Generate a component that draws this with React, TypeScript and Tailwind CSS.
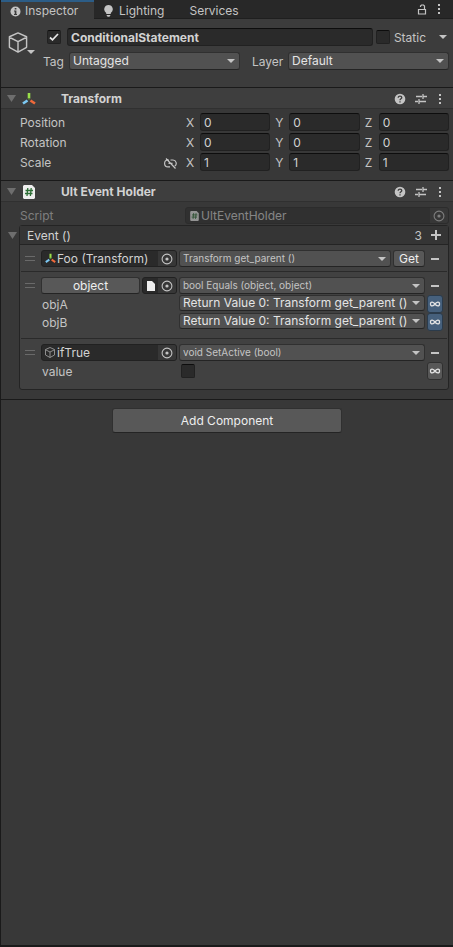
import React from 'react';

const INPUT =
  'min-w-0 rounded-[3px] border border-[#212121] border-t-[#0d0d0d] bg-[#2a2a2a] text-[#d2d2d2] outline-none';

function Arrow({ className = '' }: { className?: string }) {
  return (
    <svg viewBox="0 0 8 4" className={'h-1 w-2 fill-[#c4c4c4] ' + className} aria-hidden="true">
      <path d="M0 0h8L4 4z" />
    </svg>
  );
}

function Foldout({ label }: { label: string }) {
  return (
    <button aria-label={label} className="flex h-4 w-[9px] shrink-0 items-center">
      <svg viewBox="0 0 9 7" className="h-[7px] w-[9px] fill-[#6e6e6e]" aria-hidden="true">
        <path d="M0 0h9L4.500 7z" />
      </svg>
    </button>
  );
}

function Dropdown({ label, value, className = '', size = 'h-[18px] text-xs' }: { label: string; value: string; className?: string; size?: string }) {
  return (
    <div className={'relative min-w-0 ' + className}>
      <select
        aria-label={label}
        defaultValue={value}
        className={'block w-full appearance-none rounded-[3px] border border-[#303030] border-b-[#242424] bg-[#515151] pr-3 pl-[3px] outline-none ' + size}
      >
        <option>{value}</option>
      </select>
      <Arrow className="pointer-events-none absolute top-1/2 right-[5px] -translate-y-1/2" />
    </div>
  );
}

function Check({ label, checked = false }: { label: string; checked?: boolean }) {
  return (
    <span className="relative block size-[14px] shrink-0">
      <input
        type="checkbox"
        aria-label={label}
        defaultChecked={checked}
        className="block size-[14px] appearance-none rounded-[2px] border border-[#212121] border-t-[#0d0d0d] bg-[#2a2a2a]"
      />
      {checked && (
        <svg viewBox="0 0 14 14" className="pointer-events-none absolute inset-0 size-[14px]" fill="none" stroke="#e8e8e8" strokeWidth="1.700" aria-hidden="true">
          <path d="M3 7.500l2.500 2.300L11 4" />
        </svg>
      )}
    </span>
  );
}

function Kebab() {
  return (
    <svg viewBox="0 0 4 12" className="h-3 w-1 fill-[#c4c4c4]" aria-hidden="true">
      <path d="M1 1h2v2H1zM1 5h2v2H1zM1 9h2v2H1z" />
    </svg>
  );
}

function Cube({ className = '', width = 1.5 }: { className?: string; width?: number }) {
  return (
    <svg viewBox="0 0 20 22" className={className} fill="none" stroke="currentColor" strokeWidth={width} strokeLinejoin="round" aria-hidden="true">
      <path d="M10 1l9 4v11l-9 5-9-5V5zM1 5.500l9 4.500 9-4.500M10 10v11" />
    </svg>
  );
}

function Axes({ className = '' }: { className?: string }) {
  return (
    <svg viewBox="0 0 14 14" className={className} fill="none" strokeWidth="2.600" aria-hidden="true">
      <path d="M7 1v5.500" stroke="#9be04a" />
      <path d="M5.500 8.500L1 11.500" stroke="#7cc8f2" />
      <path d="M8.500 8.500l4.500 3" stroke="#f0693a" />
      <path d="M7 6v1.500" stroke="#5f8a35" strokeWidth="2" />
    </svg>
  );
}

function ScriptIcon({ className = '' }: { className?: string }) {
  return (
    <svg viewBox="0 0 12 14" className={className} aria-hidden="true">
      <path d="M1 0h8l3 3v10l-1 1H1l-1-1V1z" fill="#eeeeee" />
      <path d="M4.800 3L4 11M8.200 3l-.8 8M2.500 5.500h7.500M2 8.500h7.500" stroke="#2c6e35" strokeWidth="1.300" fill="none" />
    </svg>
  );
}

function Target() {
  return (
    <svg viewBox="0 0 12 12" className="size-3" fill="none" stroke="currentColor" aria-hidden="true">
      <circle cx="6" cy="6" r="4.900" strokeWidth="1.100" />
      <circle cx="6" cy="6" r="1.600" fill="currentColor" stroke="none" />
    </svg>
  );
}

function ObjectField({ icon, name, className = '', picker }: { icon: React.ReactNode; name?: string; className?: string; picker: string }) {
  return (
    <div className={'flex h-[17px] items-center overflow-hidden rounded-[3px] border border-[#212121] bg-[#2a2a2a] text-[#d2d2d2] ' + className}>
      <span className="flex w-[15px] shrink-0 justify-end">{icon}</span>
      <span className="min-w-0 flex-1 truncate whitespace-nowrap leading-4">{name}</span>
      <button aria-label={picker} className="flex h-full w-[18px] shrink-0 items-center justify-center bg-[#373737] text-[#c4c4c4]">
        <Target />
      </button>
    </div>
  );
}

function ComponentHeader({ title, icon }: { title: string; icon: React.ReactNode }) {
  return (
    <header className="flex h-[21px] items-center border-b border-[#303030] bg-[#3e3e3e] pt-px pr-[9px] pl-[6px]">
      <Foldout label={'Collapse ' + title} />
      <span className="ml-[5px] flex w-[15px] justify-center">{icon}</span>
      <h2 className="ml-[25px] flex-1 text-xs font-bold text-[#d2d2d2]">{title}</h2>
      <div className="flex items-center gap-[9px]">
        <button aria-label="Help">
          <svg viewBox="0 0 12 12" className="size-3" aria-hidden="true">
            <circle cx="6" cy="6" r="5.300" fill="#c4c4c4" />
            <path d="M4.200 4.800c0-2.400 3.600-2.200 3.600-.2C7.800 5.800 6 5.800 6 7.200M6 8.200v1.400" fill="none" stroke="#3e3e3e" strokeWidth="1.300" />
          </svg>
        </button>
        <button aria-label="Presets">
          <svg viewBox="0 0 12 12" className="size-3" fill="none" stroke="#c4c4c4" strokeWidth="1.300" aria-hidden="true">
            <path d="M1 3.500h6M8 3.500h4M8 1v5M0 8.500h3M4 8.500h7M4 6v5" />
          </svg>
        </button>
        <button aria-label="More options" className="flex w-2 justify-center">
          <Kebab />
        </button>
      </div>
    </header>
  );
}

function VectorRow({ name, value, linked }: { name: string; value: string; linked?: boolean }) {
  return (
    <div className="flex h-[18px] items-center">
      <div className="flex w-[166px] items-center justify-between pt-[2px] pr-[9px]">
        <span>{name}</span>
        {linked && (
          <button aria-label="Constrain proportions">
            <svg viewBox="0 0 13 11" className="h-[11px] w-[13px]" fill="none" stroke="#c4c4c4" strokeWidth="1.200" aria-hidden="true">
              <path d="M5 2H4a3.300 3.300 0 0 0 0 6.800h2M6.500 2H9a3.300 3.300 0 0 1 1.800 6M4.500 5.400h4M2 .5l9.500 10" />
            </svg>
          </button>
        )}
      </div>
      <div className="grid min-w-0 flex-1 grid-cols-3 gap-[5px]">
        {['X', 'Y', 'Z'].map((axis) => (
          <label key={axis} className="flex min-w-0 items-center">
            <span className="w-[14px] shrink-0 pt-[2px]">{axis}</span>
            <input className={INPUT + ' h-[18px] w-full flex-1 px-[3px]'} defaultValue={value} aria-label={name + ' ' + axis} />
          </label>
        ))}
      </div>
    </div>
  );
}

function Handle() {
  return <span className="mr-[6px] h-[5px] w-[10px] shrink-0 border-y border-[#6a6a6a]" />;
}

function Remove() {
  return (
    <button aria-label="Remove call" className="flex h-4 w-[22px] shrink-0 items-center pl-[6px]">
      <span className="h-[2px] w-2 bg-[#c4c4c4]" />
    </button>
  );
}

function LinkButton({ active = false, label }: { active?: boolean; label: string }) {
  return (
    <button
      aria-label={label}
      aria-pressed={active}
      className={'ml-[2px] flex h-[18px] w-4 shrink-0 items-center justify-center rounded-[3px] border ' + (active ? 'border-[#2b3b4b] bg-[#46607c]' : 'border-[#303030] bg-[#585858]')}
    >
      <svg viewBox="0 0 12 8" className="h-2 w-3 shrink-0" fill="none" stroke="#e4e4e4" strokeWidth="1.300" aria-hidden="true">
        <path d="M6 4C4.500 2 1.500 1 1.500 4s3 2 4.500 0 4.500-3 4.500 0S7.500 6 6 4z" />
      </svg>
    </button>
  );
}

const CALL = 'h-[17px] text-[10px] leading-[15px] text-[#c4c4c4]';
const BUTTON = 'rounded-[3px] border border-[#303030] border-b-[#242424] bg-[#585858] text-[#eeeeee]';

function ArgumentRow({ name }: { name: string }) {
  return (
    <div className="flex h-[18px] items-start pr-1">
      <span className="ml-[17px] w-[137px] pt-px leading-[18px]">{name}</span>
      <Dropdown label={name} value="Return Value 0: Transform get_parent ()" className="flex-1" size="h-4 text-xs leading-[14px] text-[#e4e4e4]" />
      <LinkButton active label={'Link ' + name} />
    </div>
  );
}

export default function App() {
  return (
    <div className="flex min-h-screen flex-col border-b-2 border-l border-[#1a1a1a] bg-[#383838] font-['Inter','Liberation_Sans',sans-serif] text-xs leading-4 text-[#c4c4c4]">
      <nav className="flex h-[19px] bg-[#282828]">
        <button className="flex w-[93px] items-center border-t-2 border-[#2c5d87] bg-[#3c3c3c] pt-px pl-[9px]">
          <svg viewBox="0 0 11 11" className="mr-[4px] size-[11px]" aria-hidden="true">
            <circle cx="5.500" cy="5.500" r="5" fill="#c4c4c4" />
            <path d="M4.700 2h1.700v1.500H4.700zM4 4.500h2.400V8H7v1H4V8h.7V5.500H4z" fill="#3c3c3c" />
          </svg>
          Inspector
        </button>
        <button className="flex items-center border-b border-[#1f1f1f] pt-[3px] pl-[10px]">
          <svg viewBox="0 0 9 12" className="mr-[6px] h-3 w-[9px] fill-[#c4c4c4]" aria-hidden="true">
            <path d="M4.500 0a4.300 4.300 0 0 1 2.300 7.900V9H2.200V7.900A4.300 4.300 0 0 1 4.500 0zM2.700 10h3.600v.8l-1 .9H3.700l-1-.9z" />
          </svg>
          Lighting
        </button>
        <button className="flex flex-1 items-center border-b border-[#1f1f1f] pt-[3px] pl-[25px]">Services</button>
        <div className="flex items-center gap-[10px] border-b border-[#1f1f1f] pr-[12px]">
          <button aria-label="Lock">
            <svg viewBox="0 0 10 11" className="h-[11px] w-[10px]" fill="none" stroke="#c4c4c4" strokeWidth="1.200" aria-hidden="true">
              <path d="M1.500 5.500h7v4.500h-7zM3.500 3V2L4.500 1h2l1 1v3.500" />
            </svg>
          </button>
          <button aria-label="Tab options">
            <Kebab />
          </button>
        </div>
      </nav>

      <section className="flex h-[69px] items-start border-b border-[#1a1a1a] bg-[#3c3c3c] pt-[9px] pr-1 pl-[7px]">
        <button aria-label="Object icon" className="relative mt-[2px] h-6 w-[27px] shrink-0">
          <Cube className="h-[21px] w-5" />
          <Arrow className="absolute right-0 bottom-0" />
        </button>
        <div className="flex min-w-0 flex-1 flex-col gap-[6px]">
          <div className="flex items-center">
            <span className="ml-3">
              <Check label="Active" checked />
            </span>
            <input aria-label="Object name" defaultValue="ConditionalStatement" className={INPUT + ' ml-[6px] h-[18px] flex-1 px-[3px] font-bold'} />
            <label className="ml-[3px] flex items-center gap-1">
              <Check label="Static" />
              <span className="pt-[2px]">Static</span>
            </label>
            <button aria-label="Static options" className="ml-[13px] flex h-4 w-[10px] items-center">
              <Arrow />
            </button>
          </div>
          <div className="flex items-center">
            <span className="w-[34px] pt-[2px] pl-2">Tag</span>
            <Dropdown label="Tag" value="Untagged" className="flex-[171]" size="h-[18px] text-xs text-[#e4e4e4]" />
            <span className="w-12 pt-[2px] pl-3">Layer</span>
            <Dropdown label="Layer" value="Default" className="flex-[161]" size="h-[18px] text-xs text-[#e4e4e4]" />
          </div>
        </div>
      </section>

      <section className="border-b border-[#1a1a1a]">
        <ComponentHeader title="Transform" icon={<Axes className="size-[14px]" />} />
        <div className="flex flex-col gap-[2px] pt-1 pr-1 pb-[9px] pl-[19px]">
          <VectorRow name="Position" value="0" />
          <VectorRow name="Rotation" value="0" />
          <VectorRow name="Scale" value="1" linked />
        </div>
      </section>

      <section className="border-b border-[#1a1a1a] pb-[9px]">
        <ComponentHeader title="Ult Event Holder" icon={<ScriptIcon className="h-[14px] w-3" />} />
        <div className="flex h-[23px] items-center pt-[4px] pr-1 pl-[19px] opacity-50">
          <span className="w-[165px]">Script</span>
          <ObjectField icon={<ScriptIcon className="mr-[2px] h-[10px] w-[9px]" />} name="UltEventHolder" className="flex-1" picker="Pick script" />
        </div>
        <div className="flex items-start pr-1 pl-[7px]">
          <div className="pt-[2px]">
            <Foldout label="Collapse event" />
          </div>
          <div className="ml-[2px] min-w-0 flex-1 rounded-[3px] border border-[#242424] bg-[#414141]">
            <div className="flex h-[19px] items-center border-b border-[#242424] bg-[#353535] px-[7px]">
              <h3 className="flex-1 pt-[2px] text-[#d2d2d2]">Event ()</h3>
              <span className="mr-[9px] pt-[2px]">3</span>
              <button aria-label="Add call">
                <svg viewBox="0 0 10 10" className="size-[10px] fill-[#c4c4c4]" aria-hidden="true">
                  <path d="M4 0h2v4h4v2H6v4H4V6H0V4h4z" />
                </svg>
              </button>
            </div>
            <div className="mx-px flex h-[27px] items-center border-b border-[#2a2a2a] pt-px pl-1">
              <Handle />
              <ObjectField icon={<Axes className="mr-px size-[11px]" />} name="Foo (Transform)" className="w-[136px]" picker="Pick target" />
              <Dropdown label="Method" value="Transform get_parent ()" className="ml-[2px] flex-1" size={CALL} />
              <button className={BUTTON + ' ml-[2px] h-[17px] w-8 leading-[15px]'}>Get</button>
              <Remove />
            </div>
            <div className="mx-px h-[67px] border-b border-[#2a2a2a] pt-[5px] pl-1">
              <div className="mb-px flex h-[17px] items-center">
                <Handle />
                <button className={BUTTON + ' h-[17px] w-[99px] leading-[15px]'}>object</button>
                <ObjectField
                  icon={
                    <svg viewBox="0 0 8 10" className="mr-[3px] h-[10px] w-2 fill-[#eeeeee]" aria-hidden="true">
                      <path d="M0 0h5l3 3v7H0z" />
                    </svg>
                  }
                  className="ml-[2px] w-[35px]"
                  picker="Pick object"
                />
                <Dropdown label="Method" value="bool Equals (object, object)" className="ml-[2px] flex-1" size={CALL} />
                <Remove />
              </div>
              <ArgumentRow name="objA" />
              <ArgumentRow name="objB" />
            </div>
            <div className="mx-px h-[50px] pt-[5px] pl-1">
              <div className="flex h-[17px] items-center">
                <Handle />
                <ObjectField icon={<Cube className="mr-[2px] h-[11px] w-[10px] text-[#9a9a9a]" width={1.8} />} name="ifTrue" className="w-[136px]" picker="Pick target" />
                <Dropdown label="Method" value="void SetActive (bool)" className="ml-[2px] flex-1" size={CALL} />
                <Remove />
              </div>
              <div className="mt-px flex h-[18px] items-center pr-1">
                <span className="ml-[17px] w-[139px] pt-[2px]">value</span>
                <Check label="value" />
                <span className="flex-1" />
                <LinkButton label="Link value" />
              </div>
            </div>
          </div>
        </div>
      </section>

      <button className={BUTTON + ' mx-auto mt-2 h-[25px] w-[230px]'}>Add Component</button>
    </div>
  );
}
